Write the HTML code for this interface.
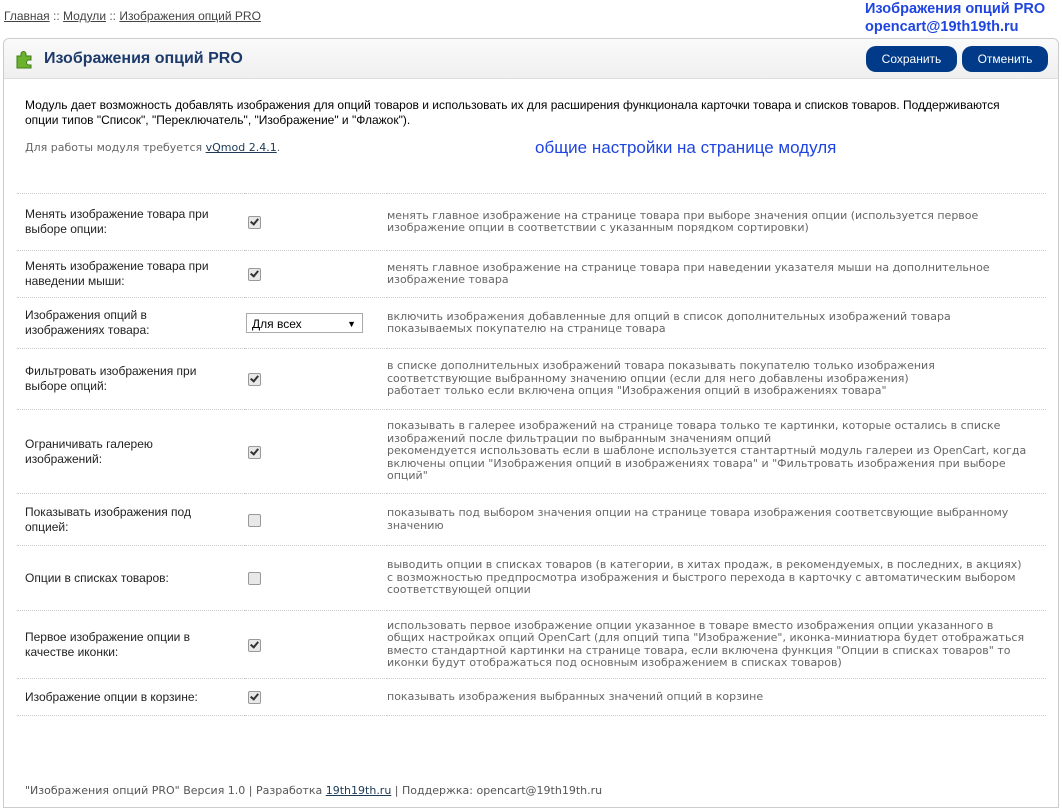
<!DOCTYPE html>
<html><head><meta charset="utf-8"><style>
body{margin:0;width:1062px;height:810px;background:#fff;font-family:"Liberation Sans",Arial,sans-serif;font-size:12px;color:#000;position:relative;overflow:hidden}
a{color:#1c3a55}
.bc{position:absolute;left:4px;top:9px;font-size:12px;color:#555}
.bc a{color:#444}
.tr{position:absolute;left:865px;top:0;color:#1f45e0;font-weight:bold;font-size:14.5px;line-height:18px}
.box{position:absolute;left:3px;top:38px;width:1054px;height:768px;border:1px solid #ccc;border-radius:6px 6px 0 0}
.hd{height:39px;border-bottom:1px solid #ddd;background:linear-gradient(#fafafa,#efefef);border-radius:6px 6px 0 0;position:relative}
.hd h1{position:absolute;left:40px;top:11px;margin:0;font-size:16px;color:#1c3a6b;font-weight:bold}
.btn{position:absolute;top:7px;height:26px;line-height:26px;background:#003a88;color:#fff;border-radius:10px;text-align:center;font-size:12px}
.intro{position:absolute;left:21px;top:59px;width:1000px;line-height:15px}
.req{position:absolute;left:21px;top:102px;color:#666;font-family:"DejaVu Sans",Verdana,sans-serif;font-size:11px}
.gen{position:absolute;left:531px;top:99px;color:#1f45e0;font-size:17px}
table{position:absolute;left:13px;top:154px;width:1029px;border-collapse:collapse}
td{border-top:1px dotted #ccc;padding:0;vertical-align:middle}
td.l{padding-left:8px;padding-right:23px;width:197px;line-height:15px;color:#222}
td.c{width:142px}
td.d{font-family:"DejaVu Sans",Verdana,sans-serif;font-size:11px;color:#666;line-height:12.5px;padding-right:16px}
.cb{display:inline-block;width:11px;height:11px;border:1px solid #999;border-radius:2px;background:#e8e8e8;margin-left:3px;position:relative;vertical-align:middle}
.cb.k:after{content:"";position:absolute;left:3px;top:0px;width:3px;height:6px;border:solid #333;border-width:0 2px 2px 0;transform:rotate(40deg)}
.sel{display:inline-block;height:20px;border:1px solid #aaa;line-height:20px;padding-left:5px;box-sizing:border-box;width:117px;position:relative;font-size:12px;margin-left:1px}
.sel:after{content:"▼";position:absolute;right:6px;top:0;font-size:9px}
.ft{position:absolute;left:21px;top:745px;font-family:"DejaVu Sans",Verdana,sans-serif;font-size:11px;color:#555}
</style></head><body>
<div class="bc"><a href="#">Главная</a> :: <a href="#">Модули</a> :: <a href="#">Изображения опций PRO</a></div>
<div class="tr">Изображения опций PRO<br>opencart@19th19th.ru</div>
<div class="box">
<div class="hd">
<svg style="position:absolute;left:10px;top:9px" width="22" height="22" viewBox="0 0 22 22"><path d="M3 8h4V6a2.5 2.5 0 0 1 5 0v2h5v4h-2a2.5 2.5 0 0 0 0 5h2v3H3z" fill="#6bb22e" stroke="#3f7d15"/></svg>
<h1>Изображения опций PRO</h1>
<div class="btn" style="left:862px;width:91px">Сохранить</div>
<div class="btn" style="left:958px;width:86px">Отменить</div>
</div>
<div class="intro">Модуль дает возможность добавлять изображения для опций товаров и использовать их для расширения функционала карточки товара и списков товаров. Поддерживаются опции типов "Список", "Переключатель", "Изображение" и "Флажок").</div>
<div class="req">Для работы модуля требуется <a href="#">vQmod 2.4.1</a>.</div>
<div class="gen">общие настройки на странице модуля</div>
<table>
<tr style="height:57px"><td class="l">Менять изображение товара при выборе опции:</td><td class="c"><span class="cb k"></span></td><td class="d">менять главное изображение на странице товара при выборе значения опции (используется первое изображение опции в соответствии с указанным порядком сортировки)</td></tr>
<tr style="height:47px"><td class="l">Менять изображение товара при наведении мыши:</td><td class="c"><span class="cb k"></span></td><td class="d">менять главное изображение на странице товара при наведении указателя мыши на дополнительное изображение товара</td></tr>
<tr style="height:51px"><td class="l">Изображения опций в изображениях товара:</td><td class="c"><span class="sel">Для всех</span></td><td class="d">включить изображения добавленные для опций в список дополнительных изображений товара показываемых покупателю на странице товара</td></tr>
<tr style="height:61px"><td class="l">Фильтровать изображения при выборе опций:</td><td class="c"><span class="cb k"></span></td><td class="d">в списке дополнительных изображений товара показывать покупателю только изображения соответствующие выбранному значению опции (если для него добавлены изображения)<br>работает только если включена опция "Изображения опций в изображениях товара"</td></tr>
<tr style="height:84px"><td class="l">Ограничивать галерею изображений:</td><td class="c"><span class="cb k"></span></td><td class="d">показывать в галерее изображений на странице товара только те картинки, которые остались в списке изображений после фильтрации по выбранным значениям опций<br>рекомендуется использовать если в шаблоне используется стантартный модуль галереи из OpenCart, когда включены опции "Изображения опций в изображениях товара" и "Фильтровать изображения при выборе опций"</td></tr>
<tr style="height:52px"><td class="l">Показывать изображения под опцией:</td><td class="c"><span class="cb"></span></td><td class="d">показывать под выбором значения опции на странице товара изображения соответсвующие выбранному значению</td></tr>
<tr style="height:65px"><td class="l">Опции в списках товаров:</td><td class="c"><span class="cb"></span></td><td class="d">выводить опции в списках товаров (в категории, в хитах продаж, в рекомендуемых, в последних, в акциях) с возможностью предпросмотра изображения и быстрого перехода в карточку с автоматическим выбором соответствующей опции</td></tr>
<tr style="height:68px"><td class="l">Первое изображение опции в качестве иконки:</td><td class="c"><span class="cb k"></span></td><td class="d">использовать первое изображение опции указанное в товаре вместо изображения опции указанного в общих настройках опций OpenCart (для опций типа "Изображение", иконка-миниатюра будет отображаться вместо стандартной картинки на странице товара, если включена функция "Опции в списках товаров" то иконки будут отображаться под основным изображением в списках товаров)</td></tr>
<tr style="height:37px"><td class="l">Изображение опции в корзине:</td><td class="c"><span class="cb k"></span></td><td class="d">показывать изображения выбранных значений опций в корзине</td></tr>
<tr style="height:1px"><td></td><td></td><td></td></tr>
</table>
<div class="ft">"Изображения опций PRO" Версия 1.0 | Разработка <a href="#">19th19th.ru</a> | Поддержка: opencart@19th19th.ru</div>
</div>
</body></html>
